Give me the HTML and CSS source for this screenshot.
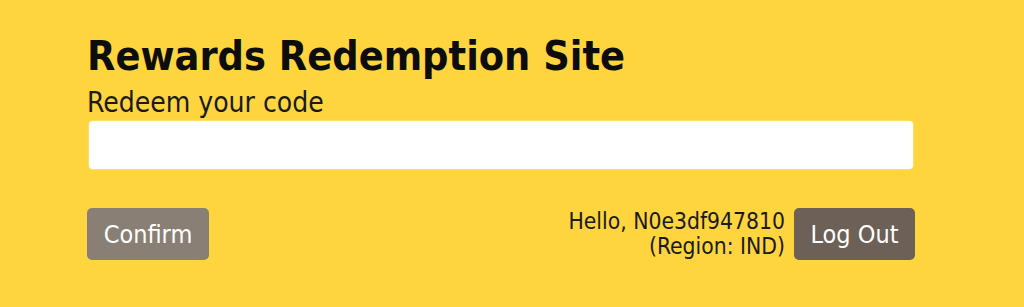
FILE: index.html
```html
<!DOCTYPE html>
<html lang="en">

<head>
    <meta charset="UTF-8">
    <meta name="viewport" content="width=device-width, initial-scale=1.0">
    <title>Rewards Redemption Site</title>
    <link rel="stylesheet" href="styles.css">
</head>

<body>

    <div class="redeem-panel">
        <h1>Rewards Redemption Site</h1>
        <label for="codeInput">Redeem your code</label>
        <input type="text" id="codeInput" class="code-input">

        <div class="actions">
            <button class="confirm-btn">Confirm</button>
            <div class="user-box">
                <div class="user-info">
                    <div>Hello, N0e3df947810</div>
                    <div>(Region: IND)</div>
                </div>
                <button class="logout-btn">Log Out</button>
            </div>
        </div>
    </div>

</body>

</html>
```

FILE: styles.css
```css
body {
    margin: 0;
    padding: 0;
    background-color: #fed53e;
    font-family: "DejaVu Sans Condensed", "DejaVu Sans", sans-serif;
    color: #111;
    height: 100vh;
}

.redeem-panel {
    width: 828px;
    padding: 32px 0 0 87px;
    display: flex;
    flex-direction: column;
}

.redeem-panel h1 {
    margin: 0;
    font-size: 41px;
    font-weight: bold;
    line-height: 48px;
    color: #0d0d0d;
}

.redeem-panel label {
    margin-top: 5px;
    font-size: 28px;
    line-height: 36px;
    color: #1a1a1a;
}

.code-input {
    margin: 0 2px;
    height: 48px;
    border: none;
    border-radius: 4px;
    background-color: #fff;
    box-shadow: 0 0 2px #fff5c0;
    padding: 0 10px;
    box-sizing: border-box;
    font-size: 18px;
}

.actions {
    display: flex;
    justify-content: space-between;
    align-items: center;
    margin-top: 39px;
}

.confirm-btn,
.logout-btn {
    height: 52px;
    border: none;
    border-radius: 5px;
    color: #fff;
    font-family: inherit;
    font-size: 25px;
    cursor: pointer;
    padding: 0;
}

.confirm-btn {
    width: 122px;
    background-color: #8a7f74;
}

.logout-btn {
    width: 121px;
    background-color: #6d6057;
}

.user-box {
    display: flex;
    align-items: center;
    gap: 9px;
}

.user-info {
    text-align: right;
    font-size: 22.7px;
    line-height: 25px;
    color: #1a1a1a;
}
```
